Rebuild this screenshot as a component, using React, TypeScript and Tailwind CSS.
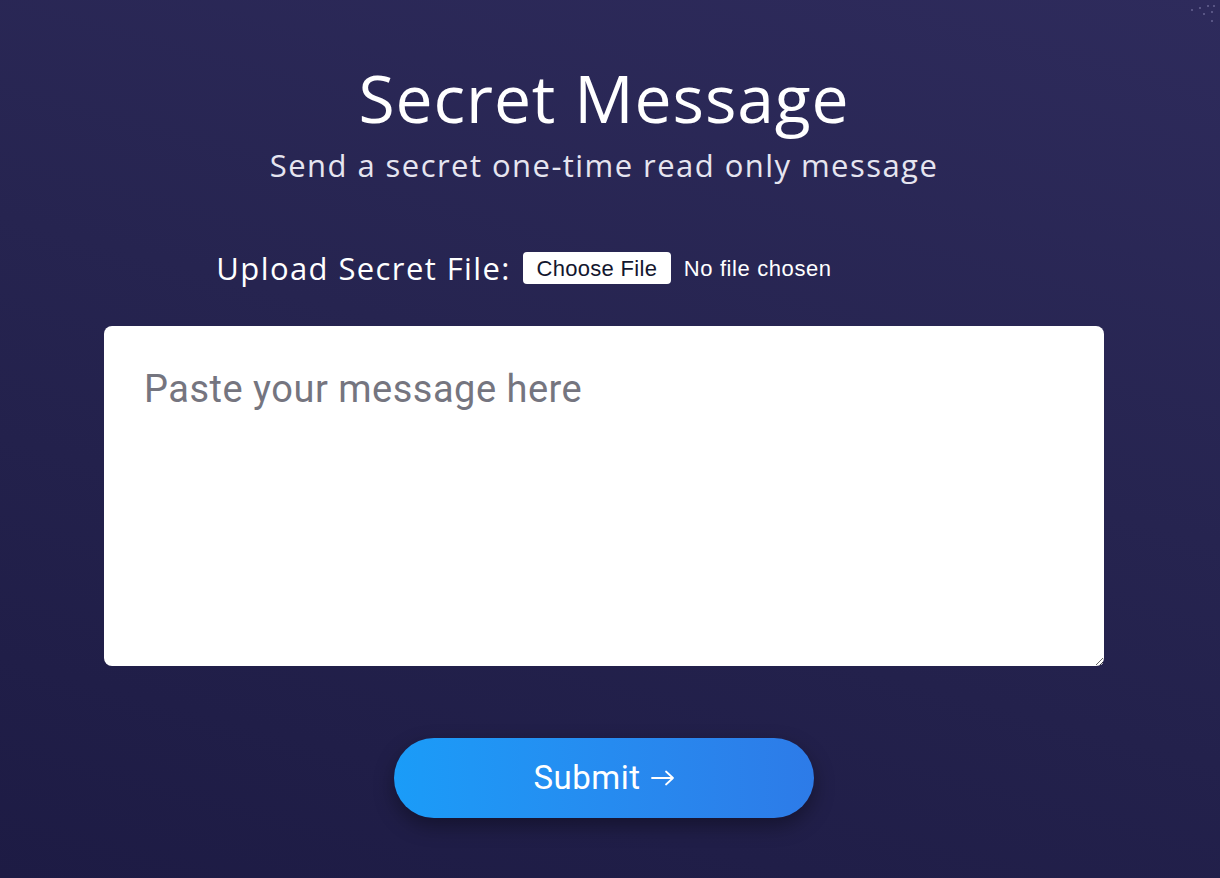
export default function App() {
  return (
    <div className="relative min-h-[878px] w-full overflow-hidden bg-[linear-gradient(195deg,#2e2b5c_0%,#262450_45%,#1d1b44_100%)] font-['Open_Sans',sans-serif] text-white">
      <svg className="absolute right-0 top-0" width="70" height="40" viewBox="0 0 70 40">
        {[
          [42, 10],
          [50, 8],
          [54, 14],
          [58, 6],
          [62, 12],
          [64, 6],
          [62, 21],
        ].map(([x, y], i) => (
          <circle key={i} cx={x} cy={y} r="0.8" fill="#8f8cb8" />
        ))}
      </svg>

      <div className="flex flex-col items-center pr-[12px] pt-[57px]">
        <h1 className="text-[66px] font-normal leading-[80px] tracking-[0.9px]">Secret Message</h1>
        <p className="mt-[9px] text-[31px] leading-[38px] tracking-[1.45px] text-[#e6e5f0]">
          Send a secret one-time read only message
        </p>

        <div className="mt-[64px] flex h-[40px] items-center pr-[160px]">
          <span className="text-[31px] leading-[40px] tracking-[1.4px]">Upload Secret File:</span>
          <span className="ml-[12px] flex h-[32px] w-[148px] items-center justify-center rounded-[4px] bg-white font-['Liberation_Sans',sans-serif] text-[22px] tracking-[0.3px] text-[#13162e]">
            Choose File
          </span>
          <span className="ml-[13px] font-['Liberation_Sans',sans-serif] text-[22px] tracking-[0.6px] text-white">
            No file chosen
          </span>
        </div>

        <textarea
          placeholder="Paste your message here"
          className="mt-[38px] h-[340px] w-[1000px] rounded-[8px] bg-white px-[40px] pt-[40px] font-['Roboto',sans-serif] text-[38px] leading-[46px] tracking-[0.5px] text-[#1a1a1a] outline-none placeholder:text-[#75757f]"
        />

        <button className="mt-[72px] flex h-[80px] w-[420px] items-center justify-center rounded-full bg-gradient-to-r from-[#1a9cf8] to-[#2d7be8] font-['Roboto',sans-serif] text-[33px] tracking-[0.5px] text-white shadow-[0_8px_20px_rgba(0,0,0,0.35)]">
          <span>Submit</span>
          <svg className="ml-[10px]" width="24" height="16" viewBox="0 0 24 16" fill="none">
            <path d="M1 8h21M15 1.5l7 6.5-7 6.5" stroke="white" strokeWidth="1.8" strokeLinecap="round" strokeLinejoin="round" />
          </svg>
        </button>
      </div>
    </div>
  );
}
